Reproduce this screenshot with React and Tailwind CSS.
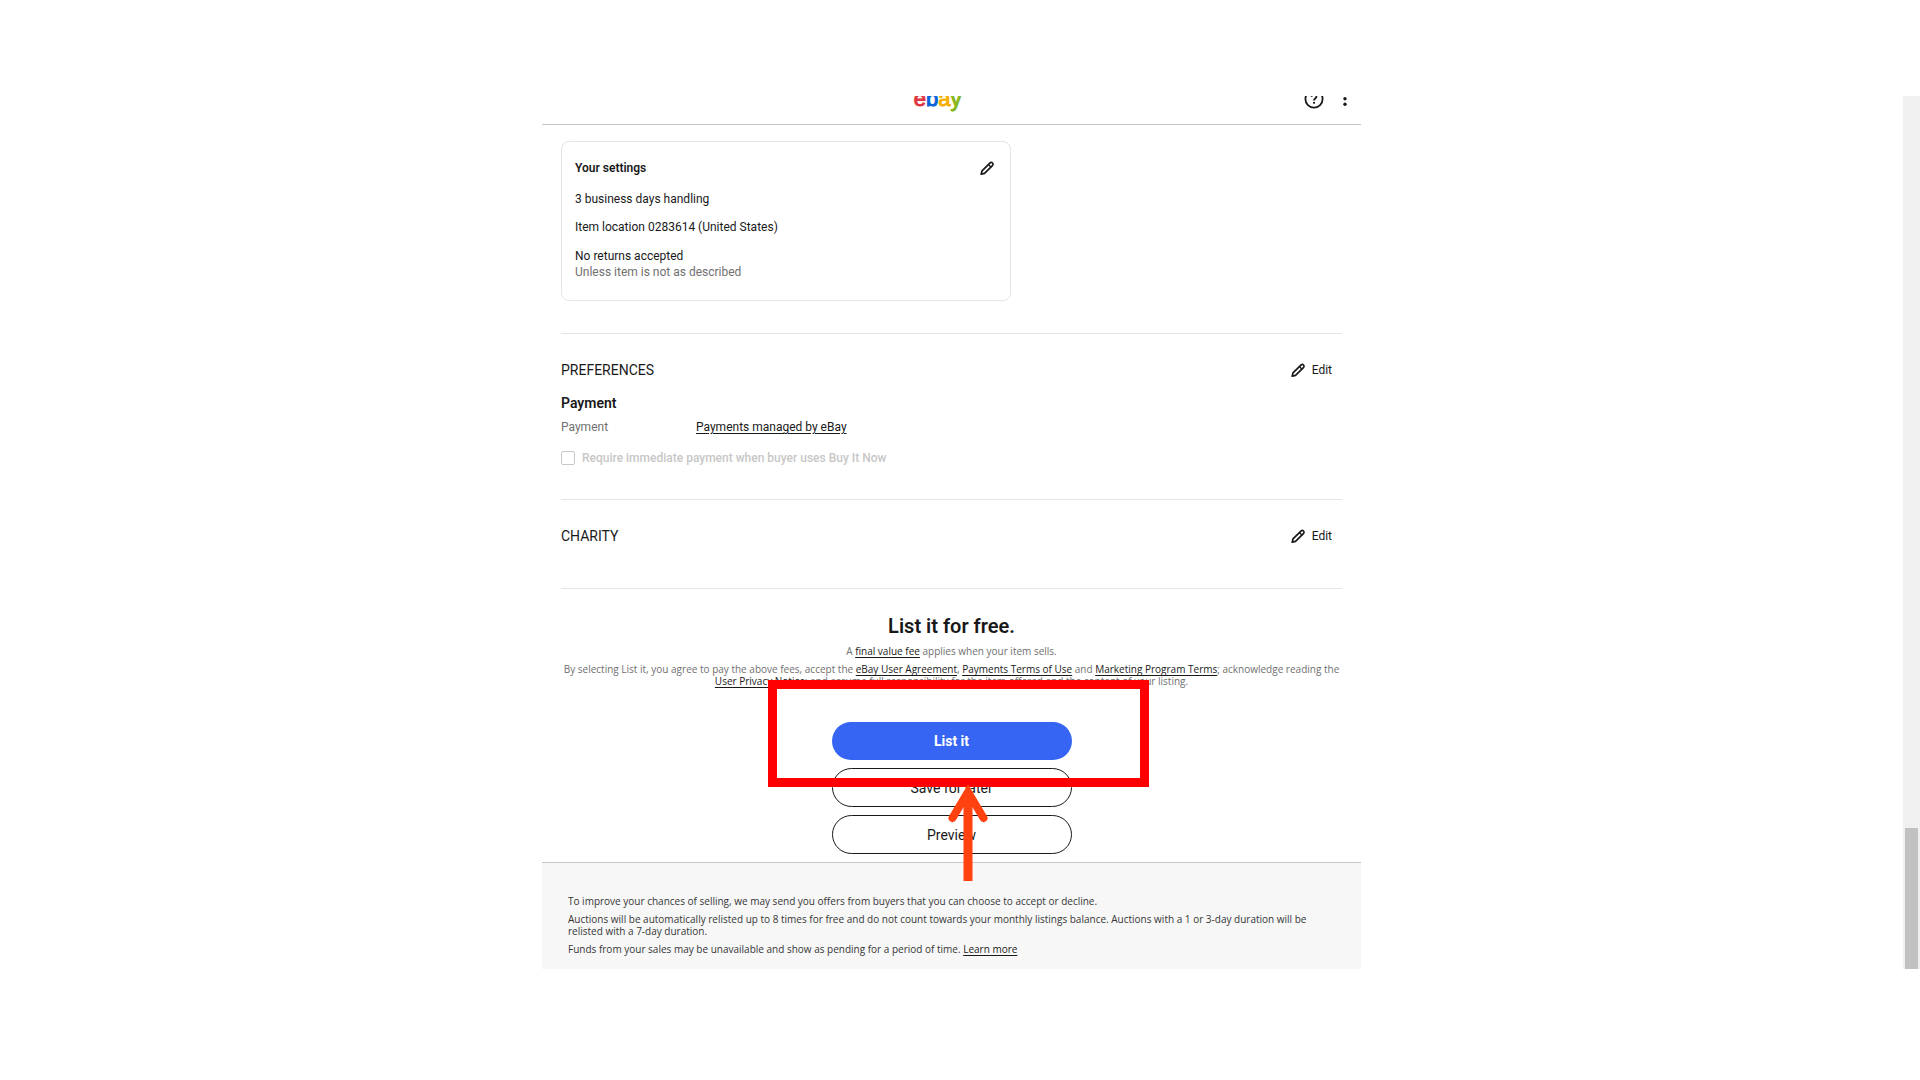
function Pencil() {
  return (
    <svg className="block h-4 w-4 shrink-0" viewBox="0 0 16 16" fill="none" stroke="#191919" strokeWidth="1.7" strokeLinejoin="round" strokeLinecap="round" aria-hidden="true">
      <path d="M2.2 14.2 3 10.9 10.900 3.100c.8-.8 1.9-.8 2.6-.1.7.7.7 1.9-.1 2.6L5.500 13.400z" />
      <path d="M9.6 4.800 11.800 7" strokeWidth="1.3" />
    </svg>
  );
}

function Link({ children }) {
  return (
    <a href="#" className="text-[#191919] underline underline-offset-2">
      {children}
    </a>
  );
}

function EditButton() {
  return (
    <button type="button" className="mr-2.5 flex items-center gap-1.5 text-xs leading-4 text-[#191919]">
      <Pencil />
      Edit
    </button>
  );
}

function Header() {
  return (
    <header className="grid h-[29px] grid-cols-3 content-end items-end overflow-hidden border-b border-[#c4c4c4] pb-3.5">
      <span />
      <a href="#" aria-label="ebay" className="mr-7 mb-px justify-self-center font-['Liberation_Sans',sans-serif] text-[22px] leading-[20px] [-webkit-text-stroke:1px]">
        <span className="text-[#e0353f]">e</span>
        <span className="text-[#0a64d8]">b</span>
        <span className="text-[#f5af02]">a</span>
        <span className="text-[#86b817]">y</span>
      </a>
      <div className="mr-3 mb-px flex items-center gap-[17px] justify-self-end">
        <button type="button" aria-label="Help">
          <svg className="block h-5 w-5" viewBox="0 0 20 20" fill="none" stroke="#191919" strokeWidth="1.8">
            <circle cx="10" cy="10" r="8.600" />
            <path d="M7.6 7.8c0-1.4 1-2.3 2.4-2.3s2.4.9 2.4 2.2c0 1.700-2.400 1.900-2.400 3.700" />
            <circle cx="10" cy="13.800" r="1.100" fill="#191919" stroke="none" />
          </svg>
        </button>
        <button type="button" aria-label="More options">
          <svg className="block h-5 w-2" viewBox="0 0 8 20" fill="#191919">
            <circle cx="4" cy="4.500" r="1.700" />
            <circle cx="4" cy="9.800" r="1.700" />
            <circle cx="4" cy="15.200" r="1.700" />
          </svg>
        </button>
      </div>
    </header>
  );
}

function SettingsCard() {
  return (
    <section className="w-[450px] rounded-lg border border-[#e5e5e5] px-[13px] pt-[18px] pb-5 text-xs leading-4 text-[#191919]">
      <div className="flex items-center justify-between">
        <h2 className="font-semibold">Your settings</h2>
        <button type="button" aria-label="Edit your settings" className="mr-0.5">
          <Pencil />
        </button>
      </div>
      <p className="mt-[15px]">3 business days handling</p>
      <p className="mt-3">Item location 0283614 (United States)</p>
      <p className="mt-[13px]">No returns accepted</p>
      <p className="text-[#707070]">Unless item is not as described</p>
    </section>
  );
}

function Preferences() {
  return (
    <section className="mt-8 border-t border-[#e5e5e5] pt-7 text-xs leading-4 text-[#191919]">
      <div className="flex items-center justify-between">
        <h2 className="text-sm leading-4">PREFERENCES</h2>
        <EditButton />
      </div>
      <h3 className="mt-[15px] text-sm leading-5 font-semibold">Payment</h3>
      <div className="mt-1.5 flex">
        <span className="w-[135px] text-[#707070]">Payment</span>
        <Link>Payments managed by eBay</Link>
      </div>
      <label className="mt-[15px] flex items-center gap-[7px] font-medium text-[#c7c7c7]">
        <input type="checkbox" disabled className="h-3.5 w-3.5 appearance-none rounded-xs border border-[#c7c7c7] bg-white" />
        Require immediate payment when buyer uses Buy It Now
      </label>
    </section>
  );
}

function Callout() {
  return (
    <>
      <div className="pointer-events-none absolute -top-[42px] left-1/2 h-[107px] w-[381px] -translate-x-[184px] border-[9px] border-[#ff0000]" />
      <svg className="pointer-events-none absolute top-[61px] left-1/2 h-[98px] w-10 -translate-x-1" viewBox="0 0 40 98" fill="none" stroke="#ff420f" aria-hidden="true">
        <path d="M20 98V12" strokeWidth="9" />
        <path d="M4.500 35 20 9l15.500 26" strokeWidth="8" strokeLinecap="round" strokeLinejoin="miter" />
      </svg>
    </>
  );
}

function ListingActions() {
  return (
    <section className="border-t border-[#e5e5e5] pt-[23px] text-center">
      <h2 className="text-xl leading-7 font-semibold text-[#191919]">List it for free.</h2>
      <p className="mt-[5px] font-['Open_Sans',sans-serif] text-[10px] leading-3 text-[#707070]">
        A <Link>final value fee</Link> applies when your item sells.
      </p>
      <p className="mt-1.5 font-['Open_Sans',sans-serif] text-[10px] leading-3 text-[#707070]">
        By selecting List it, you agree to pay the above fees, accept the <Link>eBay User Agreement</Link>,{" "}
        <Link>Payments Terms of Use</Link> and <Link>Marketing Program Terms</Link>; acknowledge reading the
        <br />
        <Link>User Privacy Notice</Link>; and assume full responsibility for the item offered and the content of your listing.
      </p>
      <div className="relative mt-[35px] mb-2 flex flex-col items-center gap-2 text-sm text-[#191919]">
        <button type="button" className="h-[38px] w-60 rounded-full bg-[#3665f3] font-bold text-white">List it</button>
        <button type="button" className="h-[39px] w-60 rounded-full border border-[#191919]">Save for later</button>
        <button type="button" className="h-[39px] w-60 rounded-full border border-[#191919]">Preview</button>
        <Callout />
      </div>
    </section>
  );
}

function Footer() {
  return (
    <footer className="flex flex-col gap-1.5 border-t border-[#c7c7c7] bg-[#f7f7f7] pt-8 pr-12 pb-3.5 pl-[26px] font-['Open_Sans',sans-serif] text-[10px] leading-3 text-[#363636]">
      <p>To improve your chances of selling, we may send you offers from buyers that you can choose to accept or decline.</p>
      <p>
        Auctions will be automatically relisted up to 8 times for free and do not count towards your monthly listings balance. Auctions with a 1 or 3-day duration will be relisted with a 7-day duration.
      </p>
      <p>
        Funds from your sales may be unavailable and show as pending for a period of time. <Link>Learn more</Link>
      </p>
    </footer>
  );
}

export default function App() {
  return (
    <div className="bg-white py-24 font-['Roboto',sans-serif]">
      <div className="flex items-stretch">
        <div className="flex flex-1 justify-center">
          <div className="w-full max-w-[819px]">
            <Header />
            <main className="px-[19px] pt-4">
              <SettingsCard />
              <Preferences />
              <section className="mt-[33px] flex items-start justify-between border-t border-[#e5e5e5] pt-7 pb-11 text-[#191919]">
                <h2 className="text-sm leading-4">CHARITY</h2>
                <EditButton />
              </section>
              <ListingActions />
            </main>
            <Footer />
          </div>
        </div>
        <div className="flex w-[17px] flex-col justify-end bg-[#f0f0f0]" aria-hidden="true">
          <div className="mx-auto h-[141px] w-[13px] bg-[#c1c1c1]" />
        </div>
      </div>
    </div>
  );
}
